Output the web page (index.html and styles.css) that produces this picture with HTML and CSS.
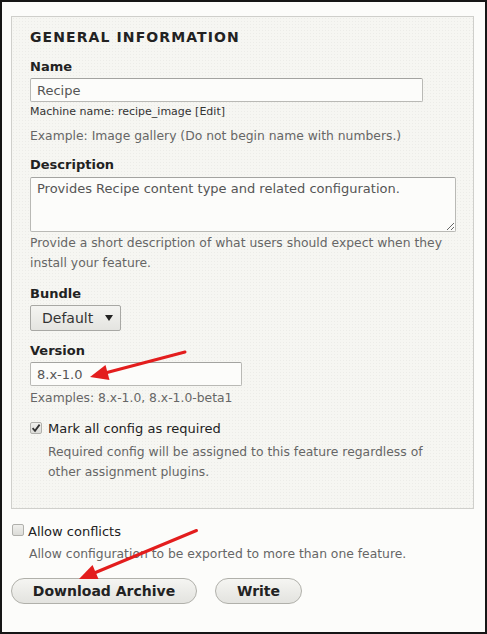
FILE: index.html
```html
<!DOCTYPE html>
<html lang="en">
<head>
<meta charset="utf-8">
<title>Feature form</title>
<link rel="stylesheet" href="styles.css">
</head>
<body>
<div class="frame">
  <div class="fieldset">
    <h2 class="legend">General information</h2>

    <div class="item">
      <label class="label">Name</label>
      <input class="text text-name" type="text" value="Recipe">
      <div class="machine">Machine name: recipe_image [Edit]</div>
      <div class="desc desc-after-machine">Example: Image gallery (Do not begin name with numbers.)</div>
    </div>

    <div class="item item-desc">
      <label class="label">Description</label>
      <textarea class="textarea">Provides Recipe content type and related configuration.</textarea>
      <div class="desc">Provide a short description of what users should expect when they install your feature.</div>
    </div>

    <div class="item item-bundle">
      <label class="label">Bundle</label>
      <div class="select">
        <span class="select-text">Default</span>
        <svg class="select-arrow" width="8" height="6" viewBox="0 0 8 6"><path d="M0 0 H8 L4 6 Z" fill="#222"/></svg>
      </div>
    </div>

    <div class="item">
      <label class="label">Version</label>
      <input class="text text-version" type="text" value="8.x-1.0">
      <div class="desc desc-version">Examples: 8.x-1.0, 8.x-1.0-beta1</div>
    </div>

    <div class="item item-check">
      <div class="check-row">
        <span class="checkbox checked">
          <svg width="10" height="10" viewBox="0 0 10 10"><path d="M1.6 5.2 L4 7.8 L8.6 1.6" fill="none" stroke="#333" stroke-width="1.8"/></svg>
        </span>
        <span class="check-label">Mark all config as required</span>
      </div>
      <div class="desc desc-check">Required config will be assigned to this feature regardless of other assignment plugins.</div>
    </div>
  </div>

  <div class="outer-check">
    <div class="check-row">
      <span class="checkbox"></span>
      <span class="check-label">Allow conflicts</span>
    </div>
    <div class="desc desc-outer">Allow configuration to be exported to more than one feature.</div>
  </div>

  <div class="actions">
    <button class="button button-download">Download Archive</button>
    <button class="button button-write">Write</button>
  </div>

  <svg class="arrows" width="487" height="634" viewBox="0 0 487 634">
    <line x1="185" y1="352" x2="107" y2="372.5" stroke="#e31d1d" stroke-width="3" stroke-linecap="round"/>
    <polygon points="90,377 109.5,380 105.5,365" fill="#e31d1d"/>
    <line x1="196.5" y1="530.5" x2="95.5" y2="572.5" stroke="#e31d1d" stroke-width="3" stroke-linecap="round"/>
    <polygon points="79,579 98.5,579 92.5,565" fill="#e31d1d"/>
  </svg>
</div>
</body>
</html>
```

FILE: styles.css
```css
* { box-sizing: border-box; }

html, body {
  margin: 0;
  padding: 0;
  background: #fcfcfa;
}

body {
  font-family: "DejaVu Sans", "Liberation Sans", sans-serif;
  font-size: 13px;
  line-height: 20px;
  color: #222;
}

.frame {
  position: relative;
  width: 487px;
  height: 634px;
  border: 2px solid #161616;
  padding: 14px 11px 0 9px;
  background: #fcfcfa;
}

.fieldset {
  border: 1px solid #cfcfcb;
  background-color: #f6f6f2;
  background-image: radial-gradient(#ecece8 0.6px, transparent 0.8px);
  background-size: 3px 3px;
  padding: 10px 18px 18px;
  height: 493px;
}

.legend {
  margin: 0 0 10px;
  font-size: 14px;
  line-height: 20px;
  font-weight: bold;
  text-transform: uppercase;
  letter-spacing: 1.1px;
  color: #222;
}

.item {
  margin-bottom: 9px;
}

.item-desc { margin-bottom: 11px; }
.item-bundle { margin-bottom: 10px; }

.label {
  display: block;
  font-weight: bold;
  margin-bottom: 1px;
  color: #222;
}

.text {
  display: block;
  height: 24px;
  padding: 0 6px;
  border: 1px solid #b9b9b5;
  border-top-color: #a3a3a0;
  border-radius: 2px;
  background: #fcfcfa;
  font-family: inherit;
  font-size: 13px;
  color: #555;
}

.text-name { width: 393px; }
.text-version { width: 212px; margin-top: 1px; }

.machine {
  font-size: 11px;
  line-height: 20px;
  color: #333;
}

.desc {
  font-size: 12.35px;
  line-height: 20px;
  color: #666;
  margin-top: 1px;
}

.desc-after-machine { margin-top: 4px; }
.desc-version { margin-top: 2px; }

.textarea {
  display: block;
  width: 426px;
  height: 55px;
  margin-top: 2px;
  padding: 2px 6px;
  border: 1px solid #b9b9b5;
  border-top-color: #a3a3a0;
  border-radius: 2px;
  background: #fcfcfa;
  font-family: inherit;
  font-size: 13px;
  line-height: 18px;
  color: #555;
  resize: vertical;
}

.select {
  display: flex;
  align-items: center;
  justify-content: space-between;
  width: 91px;
  height: 26px;
  margin-top: 1px;
  padding: 0 7px 0 11px;
  border: 1px solid #a8a8a4;
  border-radius: 2px;
  background: linear-gradient(#f4f4f1, #e4e4e0);
  font-size: 14px;
  color: #333;
}

.select-arrow { display: block; }

.item-check { margin-top: 11px; }

.check-row {
  display: flex;
  align-items: flex-start;
}

.checkbox {
  display: flex;
  align-items: center;
  justify-content: center;
  width: 12px;
  height: 12px;
  margin-top: 3px;
  border: 1px solid #b0b0ac;
  border-radius: 2px;
  background: linear-gradient(#f0f0ed, #dcdcd8);
  flex: none;
}

.check-label {
  margin-left: 6px;
  color: #222;
}

.desc-check {
  padding-left: 18px;
  margin-top: 3px;
}

.outer-check {
  margin-top: 13px;
  padding-left: 1px;
}

.outer-check .checkbox { margin-top: 2px; }
.outer-check .check-label { margin-left: 4px; }

.desc-outer {
  padding-left: 17px;
  margin-top: 2px;
}

.actions {
  display: flex;
  gap: 18px;
  margin-top: 14px;
}

.button {
  height: 26px;
  padding: 0;
  border: 1px solid #b0b0aa;
  border-radius: 14px;
  background: linear-gradient(#f5f5f2, #e3e3df);
  font-family: inherit;
  font-size: 14px;
  font-weight: bold;
  color: #222;
  line-height: 20px;
  white-space: nowrap;
  text-align: center;
}

.button-download { width: 186px; }
.button-write { width: 87px; }

.arrows {
  position: absolute;
  left: -2px;
  top: -2px;
  pointer-events: none;
}
```
